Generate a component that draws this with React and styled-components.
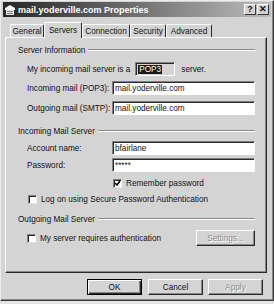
import React from 'react';
import styled, { createGlobalStyle } from 'styled-components';

const GlobalStyle = createGlobalStyle`
  html, body {
    margin: 0;
    padding: 0;
    background: #e4e4e4;
  }
  body {
    font-family: "Liberation Sans", Arial, sans-serif;
    font-size: 8.2px;
    color: #111;
  }
`;

const Window = styled.div`
  width: 274px;
  height: 301px;
  box-sizing: border-box;
  background: #d4d4d4;
  border-top: 1px solid #ececec;
  border-left: 1px solid #ececec;
  border-right: 1px solid #3a3a3a;
  border-bottom: 1px solid #3a3a3a;
  box-shadow: inset -1px -1px #868686;
  padding: 1px 2px 0 2px;
  display: flex;
  flex-direction: column;
`;

const TitleBar = styled.div`
  height: 15px;
  display: flex;
  align-items: center;
  padding: 0 2px 0 1px;
  background: linear-gradient(to right, #262626 0%, #5a5a5a 35%, #bdbdbd 100%);
`;

const TitleText = styled.span`
  margin-left: 2px;
  flex: 1;
  color: #fff;
  font-weight: bold;
  font-size: 9px;
  white-space: nowrap;
`;

const CaptionButton = styled.div`
  width: 12px;
  height: 11px;
  box-sizing: border-box;
  margin-left: ${(p) => (p.$gap ? '1px' : '0')};
  background: #d4d4d4;
  border-top: 1px solid #fff;
  border-left: 1px solid #fff;
  border-right: 1px solid #3a3a3a;
  border-bottom: 1px solid #3a3a3a;
  display: flex;
  align-items: center;
  justify-content: center;
  font-weight: bold;
  font-size: 9px;
  line-height: 1;
`;

const Body = styled.div`
  display: flex;
  flex-direction: column;
  padding: 0 4px 0 2px;
`;

const TabRow = styled.div`
  height: 15px;
  margin-top: 5px;
  padding-left: 5px;
  display: flex;
  align-items: flex-end;
  position: relative;
  z-index: 1;
`;

const Tab = styled.div`
  width: ${(p) => p.$w}px;
  height: ${(p) => (p.$active ? 16 : 13)}px;
  margin-bottom: ${(p) => (p.$active ? '-1px' : '0')};
  box-sizing: border-box;
  background: #d4d4d4;
  border-top: 1px solid #fff;
  border-left: 1px solid #fff;
  border-right: 1px solid #2a2a2a;
  border-radius: 2px 2px 0 0;
  display: flex;
  align-items: ${(p) => (p.$active ? 'flex-start' : 'center')};
  padding-top: ${(p) => (p.$active ? '3px' : '0')};
  justify-content: center;
  white-space: nowrap;
`;

const Panel = styled.div`
  height: 236px;
  box-sizing: border-box;
  border-top: 1px solid #fff;
  border-left: 1px solid #fff;
  border-right: 1px solid #2a2a2a;
  border-bottom: 1px solid #2a2a2a;
  box-shadow: inset -1px -1px #868686;
  padding: 7px 11px 0 12px;
  display: flex;
  flex-direction: column;
`;

const GroupHead = styled.div`
  height: 10px;
  margin-top: ${(p) => p.$mt || 0}px;
  display: flex;
  align-items: center;
  white-space: nowrap;

  &::after {
    content: '';
    flex: 1;
    margin-left: 3px;
    height: 0;
    border-top: 1px solid #8a8a8a;
    border-bottom: 1px solid #fff;
  }
`;

const Row = styled.div`
  height: ${(p) => p.$h || 14}px;
  margin-top: ${(p) => p.$mt || 0}px;
  padding-left: ${(p) => p.$indent ?? 9}px;
  display: flex;
  align-items: center;
  white-space: nowrap;
`;

const Label = styled.span`
  width: 85px;
  flex: none;
`;

const Field = styled.div`
  width: ${(p) => p.$w || 143}px;
  height: 14px;
  box-sizing: border-box;
  background: ${(p) => (p.$readonly ? '#d4d4d4' : '#fff')};
  border-top: 1px solid #808080;
  border-left: 1px solid #808080;
  border-right: 1px solid #fff;
  border-bottom: 1px solid #fff;
  box-shadow: inset 1px 1px #2a2a2a;
  padding: 1px 0 0 2px;
  display: flex;
  align-items: center;
`;

const Selected = styled.span`
  background: #1a1a1a;
  color: #fff;
  padding: 0 1px;
`;

const Box = styled.div`
  width: 9px;
  height: 9px;
  flex: none;
  box-sizing: border-box;
  background: #fff;
  border-top: 1px solid #808080;
  border-left: 1px solid #808080;
  border-right: 1px solid #fff;
  border-bottom: 1px solid #e0e0e0;
  box-shadow: inset 1px 1px #2a2a2a;
  margin-right: 4px;
  display: flex;
  align-items: center;
  justify-content: center;
`;

const Button = styled.div`
  width: ${(p) => p.$w || 55}px;
  height: 16px;
  margin-left: ${(p) => p.$ml || 0}px;
  box-sizing: border-box;
  background: #d4d4d4;
  border: 1px solid;
  border-color: ${(p) =>
    p.$default ? '#000' : '#fff #2a2a2a #2a2a2a #fff'};
  box-shadow: ${(p) =>
    p.$default
      ? 'inset 1px 1px #fff, inset -1px -1px #2a2a2a, inset -2px -2px #868686'
      : 'inset -1px -1px #868686'};
  display: flex;
  align-items: center;
  justify-content: center;
  color: ${(p) => (p.$disabled ? '#8a8a8a' : '#111')};
  text-shadow: ${(p) => (p.$disabled ? '1px 1px #fff' : 'none')};
`;

const Spacer = styled.div`
  flex: 1;
`;

const ButtonRow = styled.div`
  margin-top: 6px;
  padding-right: 4px;
  display: flex;
  justify-content: flex-end;
`;

const AccountIcon = () => (
  <svg width="12" height="12" viewBox="0 0 12 12">
    <path d="M1 4 L6 1 L11 4 L11 6 L1 6 Z" fill="#f4f4f4" />
    <rect x="2" y="6" width="8" height="5" fill="#e8e8e8" />
    <rect x="3" y="7" width="6" height="1" fill="#7a7a7a" />
    <rect x="3" y="9" width="6" height="1" fill="#7a7a7a" />
  </svg>
);

const Check = () => (
  <svg width="7" height="7" viewBox="0 0 7 7">
    <path d="M1 3 L3 5 L6 1" stroke="#000" strokeWidth="1.6" fill="none" />
  </svg>
);

const tabs = [
  { name: 'General', w: 34 },
  { name: 'Servers', w: 38, active: true },
  { name: 'Connection', w: 48 },
  { name: 'Security', w: 36 },
  { name: 'Advanced', w: 46 },
];

export default function App() {
  return (
    <>
      <GlobalStyle />
      <Window>
        <TitleBar>
          <AccountIcon />
          <TitleText>mail.yoderville.com Properties</TitleText>
          <CaptionButton>?</CaptionButton>
          <CaptionButton $gap>✕</CaptionButton>
        </TitleBar>
        <Body>
          <TabRow>
            {tabs.map((t) => (
              <Tab key={t.name} $w={t.w} $active={t.active}>
                {t.name}
              </Tab>
            ))}
          </TabRow>
          <Panel>
            <GroupHead>Server Information</GroupHead>
            <Row $mt={7}>
              <span>My incoming mail server is a</span>
              <Field $readonly $w={40} style={{ marginLeft: 5 }}>
                <Selected>POP3</Selected>
              </Field>
              <span style={{ marginLeft: 6 }}>server.</span>
            </Row>
            <Row $mt={5}>
              <Label>Incoming mail (POP3):</Label>
              <Field>mail.yoderville.com</Field>
            </Row>
            <Row $mt={6}>
              <Label>Outgoing mail (SMTP):</Label>
              <Field>mail.yoderville.com</Field>
            </Row>

            <GroupHead $mt={11}>Incoming Mail Server</GroupHead>
            <Row $mt={5}>
              <Label>Account name:</Label>
              <Field>bfairlane</Field>
            </Row>
            <Row $mt={3}>
              <Label>Password:</Label>
              <Field>*****</Field>
            </Row>
            <Row $mt={6} $h={10} $indent={95}>
              <Box>
                <Check />
              </Box>
              <span>Remember password</span>
            </Row>
            <Row $mt={6} $h={10} $indent={10}>
              <Box />
              <span>Log on using Secure Password Authentication</span>
            </Row>

            <GroupHead $mt={10}>Outgoing Mail Server</GroupHead>
            <Row $mt={6} $h={16}>
              <Box />
              <span>My server requires authentication</span>
              <Spacer />
              <Button $w={59} $disabled>
                Settings...
              </Button>
            </Row>
          </Panel>
          <ButtonRow>
            <Button $default>OK</Button>
            <Button $ml={6}>Cancel</Button>
            <Button $ml={5} $disabled>
              Apply
            </Button>
          </ButtonRow>
        </Body>
      </Window>
    </>
  );
}
